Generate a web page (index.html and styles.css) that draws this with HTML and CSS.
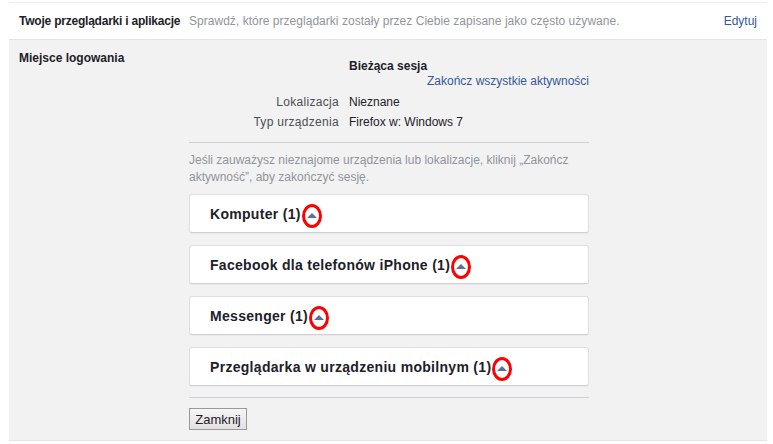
FILE: index.html
```html
<!DOCTYPE html>
<html lang="pl">
<head>
<meta charset="utf-8">
<link rel="stylesheet" href="styles.css">
</head>
<body>
<div class="page">
  <div class="toprow">
    <div class="toptitle">Twoje przeglądarki i aplikacje</div>
    <div class="topdesc">Sprawdź, które przeglądarki zostały przez Ciebie zapisane jako często używane.</div>
    <a class="edit">Edytuj</a>
  </div>
  <div class="section">
    <div class="sectitle">Miejsce logowania</div>
    <div class="content">
      <div class="kv head"><span class="k"></span><span class="v bold">Bieżąca sesja</span></div>
      <div class="endall"><a>Zakończ wszystkie aktywności</a></div>
      <div class="kv info"><span class="k">Lokalizacja</span><span class="v">Nieznane</span></div>
      <div class="kv info"><span class="k">Typ urządzenia</span><span class="v">Firefox w: Windows 7</span></div>
      <div class="rule"></div>
      <p class="hint">Jeśli zauważysz nieznajome urządzenia lub lokalizacje, kliknij „Zakończ aktywność”, aby zakończyć sesję.</p>
      <div class="cards">
        <div class="card"><span class="ctitle">Komputer (1)</span><span class="mark"><span class="tri"></span></span></div>
        <div class="card"><span class="ctitle">Facebook dla telefonów iPhone (1)</span><span class="mark"><span class="tri"></span></span></div>
        <div class="card"><span class="ctitle">Messenger (1)</span><span class="mark"><span class="tri"></span></span></div>
        <div class="card"><span class="ctitle">Przeglądarka w urządzeniu mobilnym (1)</span><span class="mark"><span class="tri"></span></span></div>
      </div>
      <div class="rule rule2"></div>
      <button class="btn">Zamknij</button>
    </div>
  </div>
</div>
</body>
</html>
```
FILE: styles.css
```css
html, body { margin: 0; padding: 0; background: #fff; }
body { font-family: "Liberation Sans", Arial, sans-serif; font-size: 12px; color: #1d2129; padding-top: 2px; }
.page { margin-left: 9px; width: 758px; }
.toprow { border-top: 1px solid #e9ebee; height: 36px; display: flex; align-items: center; padding: 0 10px; }
.toptitle { font-weight: bold; width: 170px; letter-spacing: -0.22px; }
.topdesc { color: #90949c; flex: 1; letter-spacing: 0.03px; }
.edit { color: #365899; }
.section { background: #f2f2f2; border-top: 1px solid #e5e5e5; border-bottom: 1px solid #e5e5e5; padding: 10px 10px 10px; display: flex; }
.sectitle { width: 170px; font-weight: bold; line-height: 16px; }
.content { width: 400px; }
.kv { display: flex; }
.kv .k { width: 150px; text-align: right; color: #4b4f56; margin-right: 10px; letter-spacing: 0.3px; }
.kv .v { color: #1d2129; }
.bold { font-weight: bold; }
.head { margin-top: 9px; line-height: 15px; }
.endall { text-align: right; line-height: 15px; }
.endall a { color: #365899; }
.info { line-height: 16px; margin-top: 4px; }
.endall + .info { margin-top: 5px; }
.rule { border-top: 1px solid #d0d1d5; margin-top: 12px; }
.hint { margin: 9px 0 0; line-height: 17px; color: #90949c; }
.cards { margin-top: 8px; display: flex; flex-direction: column; gap: 12px; }
.card { height: 37px; background: #fff; border: 1px solid #dddfe2; border-bottom-color: #cfd1d5; border-radius: 3px; display: flex; align-items: center; padding-left: 20px; box-shadow: 0 1px 1px rgba(0,0,0,0.04); }
.ctitle { font-weight: bold; font-size: 14px; color: #1d2129; letter-spacing: 0.3px; }
.mark { width: 14px; height: 18px; border: 3px solid #f00; border-radius: 50%; display: inline-flex; align-items: center; justify-content: center; margin-left: 1px; position: relative; top: 2px; }
.tri { width: 0; height: 0; border-left: 5px solid transparent; border-right: 5px solid transparent; border-bottom: 5px solid #5b6f9b; }
.rule2 { margin-top: 11px; }
.btn { margin-top: 10px; height: 22px; width: 58px; padding: 0; font-family: "Liberation Sans", Arial, sans-serif; font-size: 13px; color: #1d2129; background: linear-gradient(#f6f6f6, #e1e1e1); border: 1px solid #999; border-radius: 0; }
```
